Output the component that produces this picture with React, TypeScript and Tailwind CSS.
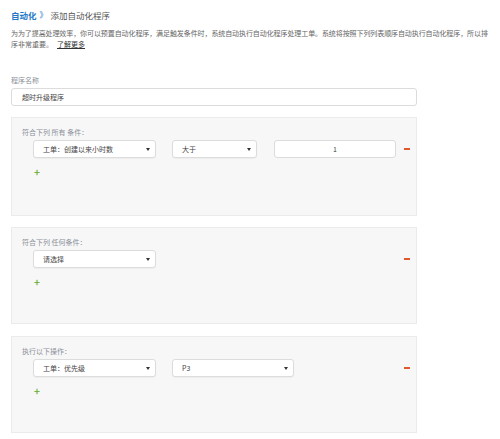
import React from 'react';

const font = { fontFamily: '"Noto Sans CJK SC", "Noto Sans", sans-serif' };

const Arrow: React.FC = () => (
  <svg width="4" height="3" viewBox="0 0 4 3" className="shrink-0">
    <path d="M0 0 L4 0 L2 3 Z" fill="#333" />
  </svg>
);

const Select: React.FC<{ text: string; w: string }> = ({ text, w }) => (
  <div className={`${w} h-[18px] bg-white border border-[#dcdcdc] rounded-[3px] shadow-[0_1px_1px_rgba(0,0,0,0.04)] flex items-center justify-between pl-[9px] pr-[5px] text-[7px] text-[#444]`}>
    <span>{text}</span>
    <Arrow />
  </div>
);

const Minus: React.FC = () => <div className="w-[6px] h-[2px] bg-[#e2582e] mr-[6px]" />;

const Plus: React.FC = () => (
  <div className="ml-[22px] h-[10px] leading-[10px] text-[10px] font-bold text-[#72b43f]">+</div>
);

const Box: React.FC<{ label: string; h: string; children: React.ReactNode }> = ({ label, h, children }) => (
  <div className={`${h} bg-[#f7f7f7] border border-[#ebebeb] pt-[9px]`}>
    <div className="pl-[10px] h-[10px] leading-[10px] text-[7px] text-[#8a8f99]">{label}</div>
    <div className="mt-[3px] pl-[21px] flex items-center justify-between">
      {children}
    </div>
    <div className="mt-[9px]">
      <Plus />
    </div>
  </div>
);

export default function App() {
  return (
    <div className="w-[500px] h-[439px] bg-white overflow-hidden pl-[11px]" style={font}>
      <div className="pt-[8px] h-[22px] leading-[14px] flex items-center">
        <span className="text-[8.5px] font-bold text-[#1f78c8]">自动化</span>
        <span className="text-[8px] text-[#1f78c8] mx-[3px]">》</span>
        <span className="text-[8.5px] text-[#555]">添加自动化程序</span>
      </div>
      <div className="mt-[6px] text-[7px] leading-[10.5px] text-[#666]">
        <div className="whitespace-nowrap tracking-[-0.09px]">
          为为了提高处理效率，你可以预置自动化程序，满足触发条件时，系统自动执行自动化程序处理工单。系统将按照下列列表顺序自动执行自动化程序，所以排
        </div>
        <div className="whitespace-nowrap">
          序非常重要。<span className="ml-[4px] text-[#333] underline">了解更多</span>
        </div>
      </div>

      <div className="w-[406px]">
        <div className="mt-[26px] h-[10px] leading-[10px] text-[7px] text-[#8a8f99]">程序名称</div>
        <div className="mt-[3px] h-[18px] bg-white border border-[#dcdcdc] rounded-[3px] flex items-center pl-[10px] text-[7px] text-[#444]">
          超时升级程序
        </div>

        <div className="mt-[11px]">
          <Box label="符合下列 所有 条件：" h="h-[99px]">
            <div className="flex items-center">
              <Select text="工单：创建以来小时数" w="w-[123px]" />
              <div className="ml-[16px]">
                <Select text="大于" w="w-[85px]" />
              </div>
              <div className="ml-[17px] w-[122px] h-[18px] bg-white border border-[#dcdcdc] rounded-[3px] flex items-center justify-center text-[7px] text-[#444]">
                1
              </div>
            </div>
            <Minus />
          </Box>
        </div>

        <div className="mt-[11px]">
          <Box label="符合下列 任何条件：" h="h-[97px]">
            <div className="flex items-center">
              <Select text="请选择" w="w-[123px]" />
            </div>
            <Minus />
          </Box>
        </div>

        <div className="mt-[12px]">
          <Box label="执行以下操作：" h="h-[97px]">
            <div className="flex items-center">
              <Select text="工单：优先级" w="w-[123px]" />
              <div className="ml-[16px]">
                <Select text="P3" w="w-[122px]" />
              </div>
            </div>
            <Minus />
          </Box>
        </div>
      </div>
    </div>
  );
}
